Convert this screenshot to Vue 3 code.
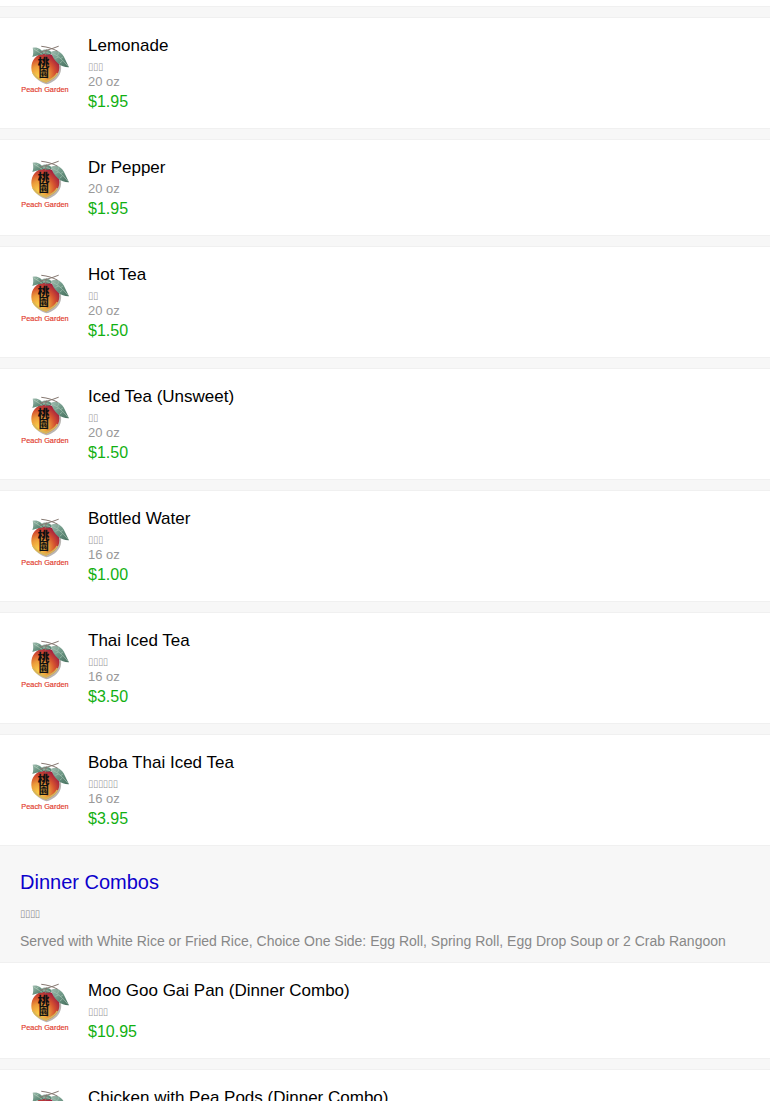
<template>
  <main class="menu">
    <section class="menu__group" aria-label="Drinks">
      <article v-for="item in drinks" :key="item.name" class="dish">
        <svg class="dish__logo" viewBox="0 0 150 168" role="img" aria-label="Peach Garden">
          <use href="#peach-logo" />
        </svg>
        <div class="dish__info">
          <h3 class="dish__name">{{ item.name }}</h3>
          <p v-if="item.native" class="dish__note dish__note--native">{{ item.native }}</p>
          <p v-if="item.size" class="dish__note">{{ item.size }}</p>
          <p class="dish__price">{{ item.price }}</p>
        </div>
      </article>
    </section>

    <section class="menu__group">
      <header class="menu__header">
        <h2 class="menu__title"><a href="#dinner-combos">Dinner Combos</a></h2>
        <p class="menu__text menu__text--native">▯▯▯▯</p>
        <p class="menu__text">
          Served with White Rice or Fried Rice, Choice One Side: Egg Roll, Spring Roll, Egg Drop Soup or 2 Crab Rangoon
        </p>
      </header>
      <article v-for="item in combos" :key="item.name" class="dish">
        <svg class="dish__logo" viewBox="0 0 150 168" role="img" aria-label="Peach Garden">
          <use href="#peach-logo" />
        </svg>
        <div class="dish__info">
          <h3 class="dish__name">{{ item.name }}</h3>
          <p class="dish__note dish__note--native">{{ item.native }}</p>
          <p class="dish__price">{{ item.price }}</p>
        </div>
      </article>
    </section>

    <!-- Shared logo artwork -->
    <svg class="sprite" aria-hidden="true">
      <defs>
        <radialGradient id="peach-skin" cx="0.28" cy="0.76" r="0.82">
          <stop offset="0" stop-color="#fbd04c" />
          <stop offset="0.4" stop-color="#eb9a3a" />
          <stop offset="0.7" stop-color="#d4502f" />
          <stop offset="1" stop-color="#a3203f" />
        </radialGradient>
        <linearGradient id="peach-leaf" x1="0" y1="0" x2="1" y2="1">
          <stop offset="0" stop-color="#a3beb2" />
          <stop offset="0.5" stop-color="#6a9482" />
          <stop offset="1" stop-color="#456e5d" />
        </linearGradient>
        <symbol id="peach-logo" viewBox="0 0 150 168">
          <path d="M84 32 C114 32 129 56 122 80 C116 102 96 113 80 118 C60 111 45 102 41 84 Z" fill="#b9b5b2" />
          <path d="M74 27 C98 22 118 42 118 67 C118 92 98 105 78 113 C55 106 34 95 34 69 C34 44 51 24 74 27 Z" fill="url(#peach-skin)" />
          <path d="M39 84 C47 100 64 106 78 110 C94 104 106 97 112 84" fill="none" stroke="#d4b65c" stroke-width="5" />
          <path d="M38 8 C53 5 66 13 72 27 C62 30 50 31 37 36 C41 27 40 17 38 8 Z" fill="url(#peach-leaf)" />
          <path d="M64 18 C75 10 91 14 96 26 C86 32 72 31 64 18 Z" fill="url(#peach-leaf)" />
          <path d="M92 21 C106 14 117 17 126 27 C134 36 138 50 147 67 C124 68 103 52 92 21 Z" fill="url(#peach-leaf)" />
          <path d="M94 24 C114 31 128 45 144 64 M112 32 L117 22 M121 41 L129 36 M116 36 L106 40 M127 48 L119 55" fill="none" stroke="#a5c3b2" stroke-width="2" />
          <path d="M40 11 L67 28 M50 17 L56 10 M68 20 L91 26" fill="none" stroke="#b3d0bb" stroke-width="2" />
          <path d="M60 22 C74 17 92 13 115 4 M65 4 C84 6 98 11 112 18 M79 15 L76 30" fill="none" stroke="#857770" stroke-width="3" stroke-linecap="round" />
          <text class="sprite__hanzi" x="71" y="66" text-anchor="middle">桃</text>
          <text class="sprite__hanzi sprite__hanzi--small" x="71" y="97" text-anchor="middle">園</text>
          <text class="sprite__brand" x="75" y="142" text-anchor="middle">Peach Garden</text>
        </symbol>
      </defs>
    </svg>
  </main>
</template>

<script setup>
const drinks = [
  { name: 'Lemonade', native: '▯▯▯', size: '20 oz', price: '$1.95' },
  { name: 'Dr Pepper', native: '', size: '20 oz', price: '$1.95' },
  { name: 'Hot Tea', native: '▯▯', size: '20 oz', price: '$1.50' },
  { name: 'Iced Tea (Unsweet)', native: '▯▯', size: '20 oz', price: '$1.50' },
  { name: 'Bottled Water', native: '▯▯▯', size: '16 oz', price: '$1.00' },
  { name: 'Thai Iced Tea', native: '▯▯▯▯', size: '16 oz', price: '$3.50' },
  { name: 'Boba Thai Iced Tea', native: '▯▯▯▯▯▯', size: '16 oz', price: '$3.95' },
]

const combos = [
  { name: 'Moo Goo Gai Pan (Dinner Combo)', native: '▯▯▯▯', price: '$10.95' },
  { name: 'Chicken with Pea Pods (Dinner Combo)', native: '▯▯▯▯', price: '$10.95' },
]
</script>

<style>
body {
  margin: 0;
  background: #f7f7f7;
}
</style>

<style scoped>
.menu {
  padding-top: 7px;
  background: linear-gradient(#fff 6px, #f0f0f0 6px, #f0f0f0 7px, #f7f7f7 7px);
  font-family: "Liberation Sans", Arial, sans-serif;
}

.menu__group:first-child {
  padding-top: 10px;
}

.menu__header {
  padding: 14px 20px 11px;
}

.menu__title {
  margin: 0 0 10px;
  font-size: 20px;
  font-weight: 400;
  line-height: 24px;
}

.menu__title a {
  color: #0c00cc;
  text-decoration: none;
}

.menu__text {
  margin: 0 0 7px;
  font-size: 14px;
  line-height: 20px;
  color: #888;
}

.menu__text:last-child {
  margin-bottom: 0;
}

.dish {
  display: flex;
  align-items: center;
  gap: 18px;
  margin-bottom: 10px;
  padding: 17px 20px;
  border-top: 1px solid #f0f0f0;
  border-bottom: 1px solid #f0f0f0;
  background: #fff;
}

.dish__logo {
  flex: none;
  width: 50px;
  height: 56px;
}

.dish__info {
  padding-top: 1px;
}

.dish__name {
  margin: 0 0 3px;
  font-size: 17px;
  font-weight: 400;
  line-height: 20px;
  color: #000;
}

.dish__note {
  margin: 0;
  font-size: 13px;
  line-height: 15px;
  color: #999;
}

/* native names come through as empty boxes */
.dish__note--native,
.menu__text--native {
  font-family: "DejaVu Sans Condensed", "DejaVu Sans", sans-serif;
  font-size: 10px;
}

.dish__price {
  margin: 3px 0 -1px;
  font-size: 16px;
  line-height: 20px;
  color: #12b012;
}

.sprite {
  display: block;
  width: 0;
  height: 0;
}

.sprite__hanzi {
  font-family: "Noto Sans CJK TC", sans-serif;
  font-size: 35px;
  font-weight: 900;
  fill: #111;
}

.sprite__hanzi--small {
  font-size: 30px;
}

.sprite__brand {
  font-size: 22px;
  fill: #e23a2c;
  stroke: #e23a2c;
  stroke-width: 0.5px;
}
</style>
